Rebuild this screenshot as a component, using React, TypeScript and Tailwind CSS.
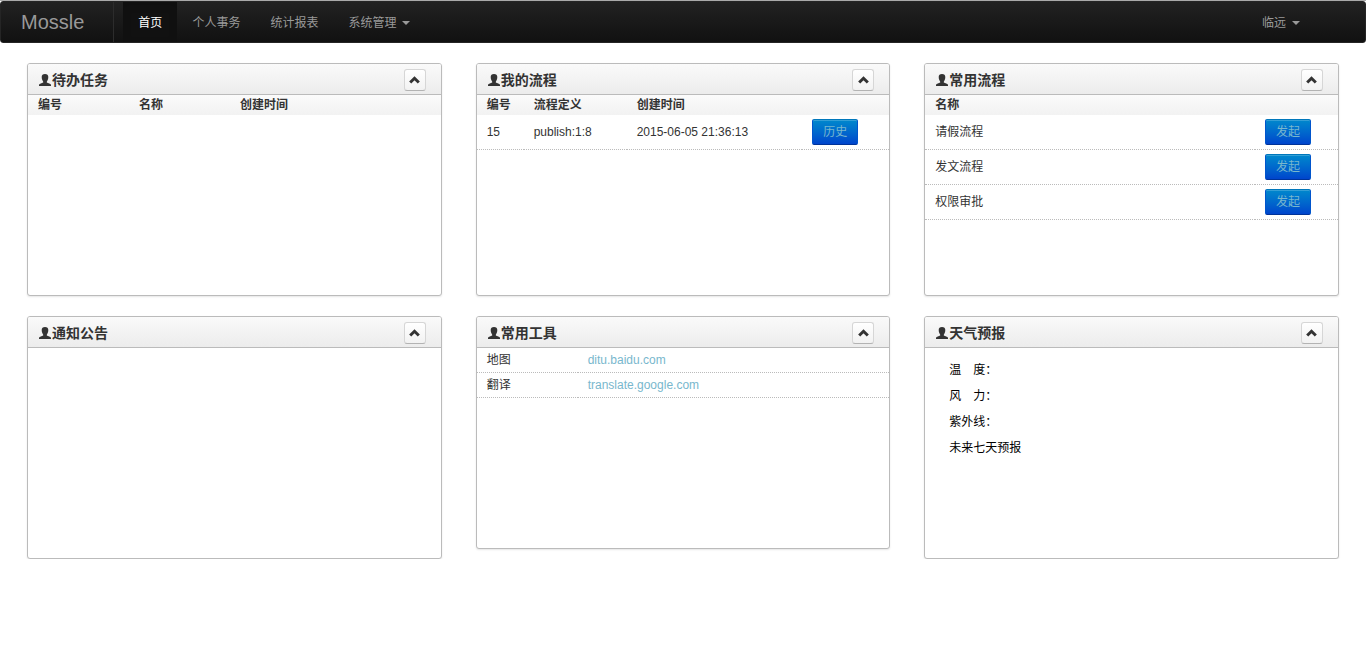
import type { ReactNode } from "react"

const navItems = [
  { label: "首页", active: true },
  { label: "个人事务" },
  { label: "统计报表" },
  { label: "系统管理", dropdown: true },
]

const processes = ["请假流程", "发文流程", "权限审批"]

const tools = [
  { name: "地图", host: "ditu.baidu.com" },
  { name: "翻译", host: "translate.google.com" },
]

const weather = ["温　度：", "风　力：", "紫外线：", "未来七天预报"]

function Caret() {
  return <span className="ml-1.5 border-x-4 border-t-4 border-x-transparent border-t-[#999999]" />
}

function UserIcon() {
  return (
    <svg className="h-3 w-3 shrink-0" viewBox="0 0 12 12" fill="#333333" aria-hidden="true">
      <path d="M6 0C3.800 0 2.700 1.200 2.700 3.100c0 1.200.2 2.300.7 3.200.3.600.6 1.100.8 1.500v.7L1.200 9.700C.4 10 0 10.400 0 11v1h12v-1c0-.6-.4-1-1.200-1.300L7.800 8.500v-.7c.2-.4.5-.9.8-1.500.5-.9.7-2 .7-3.200C9.300 1.200 8.200 0 6 0z" />
    </svg>
  )
}

function ChevronUpIcon() {
  return (
    <svg className="h-2 w-[11px]" viewBox="0 0 11 8" fill="none" aria-hidden="true">
      <path d="M1.200 6.500 5.500 2.300 9.800 6.500" stroke="#333333" strokeWidth="3" />
    </svg>
  )
}

function Widget({ title, children, className = "min-h-[233px]" }: { title: string; children?: ReactNode; className?: string }) {
  return (
    <section className={`rounded-[3px] border border-[#bbbbbb] bg-white shadow-[0_1px_2px_rgba(0,0,0,0.1)] ${className}`}>
      <header className="flex h-[31px] items-center justify-between rounded-t-[2px] border-b border-[#bbbbbb] bg-linear-to-b from-[#fafafa] to-[#ececec] pt-px pr-[15px] pl-[11px]">
        <h2 className="flex items-center gap-px text-sm leading-5 font-bold">
          <UserIcon />
          {title}
        </h2>
        <button
          type="button"
          aria-label="收起"
          className="flex h-[22px] w-[22px] items-center justify-center rounded-[3px] border border-[#d6d6d6] border-b-[#b3b3b3] bg-linear-to-b from-white to-[#f2f2f2]"
        >
          <ChevronUpIcon />
        </button>
      </header>
      {children}
    </section>
  )
}

function HeadRow({ columns }: { columns: string[] }) {
  return (
    <thead>
      <tr className="h-5 bg-linear-to-b from-[#fbfbfb] to-[#f2f2f2] text-left">
        {columns.map((column, i) => (
          <th key={i} className="px-[10px] py-0 font-bold">
            {column}
          </th>
        ))}
      </tr>
    </thead>
  )
}

function Cell({ children }: { children: ReactNode }) {
  return <td className="border-b border-dotted border-[#bbbbbb] px-[10px] py-0">{children}</td>
}

function ActionLink({ children }: { children: ReactNode }) {
  return (
    <a
      href="#"
      className="block h-[26px] w-[46px] rounded-[2px] border border-[#0055cc] border-t-[#0077bb] border-b-[#003399] bg-linear-to-b from-[#0088cc] to-[#0044cc] text-center leading-6 text-[#78b7cd] shadow-[inset_0_1px_0_rgba(255,255,255,0.2)]"
    >
      {children}
    </a>
  )
}

export default function App() {
  return (
    <div className="bg-white font-['Liberation_Sans','Noto_Sans_CJK_SC',sans-serif] text-xs leading-5 text-[#333333]">
      <nav className="border-t border-[#aaaaaa]">
        <div className="flex h-[42px] items-stretch rounded-[3px] border border-[#252525] bg-linear-to-b from-[#222222] to-[#111111] text-[#999999]">
          <a href="#" className="mr-[9px] flex items-center border-r border-[#2c2c2c] pr-[29px] pl-5 text-xl leading-5">
            Mossle
          </a>
          <ul className="flex flex-1">
            {navItems.map((item) => (
              <li key={item.label} className="flex">
                <a
                  href="#"
                  className={
                    item.active
                      ? "flex items-center bg-[#111111] px-[15px] pt-0.5 text-white shadow-[inset_0_3px_8px_rgba(0,0,0,0.125)]"
                      : "flex items-center px-[15px] pt-0.5"
                  }
                >
                  {item.label}
                  {item.dropdown && <Caret />}
                </a>
              </li>
            ))}
          </ul>
          <a href="#" className="mr-[50px] flex items-center px-[15px] pt-0.5">
            临远
            <Caret />
          </a>
        </div>
      </nav>

      <main className="grid grid-cols-3 items-start gap-x-[34px] gap-y-5 px-[27px] pt-5">
        <Widget title="待办任务">
          <table className="w-full table-fixed border-separate border-spacing-0">
            <colgroup>
              <col className="w-[101px]" />
              <col className="w-[101px]" />
              <col />
            </colgroup>
            <HeadRow columns={["编号", "名称", "创建时间"]} />
          </table>
        </Widget>

        <Widget title="我的流程">
          <table className="w-full table-fixed border-separate border-spacing-0">
            <colgroup>
              <col className="w-[47px]" />
              <col className="w-[103px]" />
              <col />
              <col className="w-[87px]" />
            </colgroup>
            <HeadRow columns={["编号", "流程定义", "创建时间", ""]} />
            <tbody>
              <tr className="h-[35px]">
                <Cell>15</Cell>
                <Cell>publish:1:8</Cell>
                <Cell>2015-06-05 21:36:13</Cell>
                <Cell>
                  <ActionLink>历史</ActionLink>
                </Cell>
              </tr>
            </tbody>
          </table>
        </Widget>

        <Widget title="常用流程">
          <table className="w-full table-fixed border-separate border-spacing-0">
            <colgroup>
              <col />
              <col className="w-[83px]" />
            </colgroup>
            <HeadRow columns={["名称", ""]} />
            <tbody>
              {processes.map((name) => (
                <tr key={name} className="h-[35px]">
                  <Cell>{name}</Cell>
                  <Cell>
                    <ActionLink>发起</ActionLink>
                  </Cell>
                </tr>
              ))}
            </tbody>
          </table>
        </Widget>

        <Widget title="通知公告" className="min-h-[243px]" />

        <Widget title="常用工具">
          <table className="w-full table-fixed border-separate border-spacing-0">
            <colgroup>
              <col className="w-[101px]" />
              <col />
            </colgroup>
            <tbody>
              {tools.map((tool) => (
                <tr key={tool.host} className="h-[25px]">
                  <Cell>{tool.name}</Cell>
                  <Cell>
                    <a href="#" className="text-[#78b7cd]">
                      {tool.host}
                    </a>
                  </Cell>
                </tr>
              ))}
            </tbody>
          </table>
        </Widget>

        <Widget title="天气预报" className="min-h-[243px]">
          <ul className="px-6 py-[9px] leading-[26px] text-black">
            {weather.map((line) => (
              <li key={line}>{line}</li>
            ))}
          </ul>
        </Widget>
      </main>
    </div>
  )
}
